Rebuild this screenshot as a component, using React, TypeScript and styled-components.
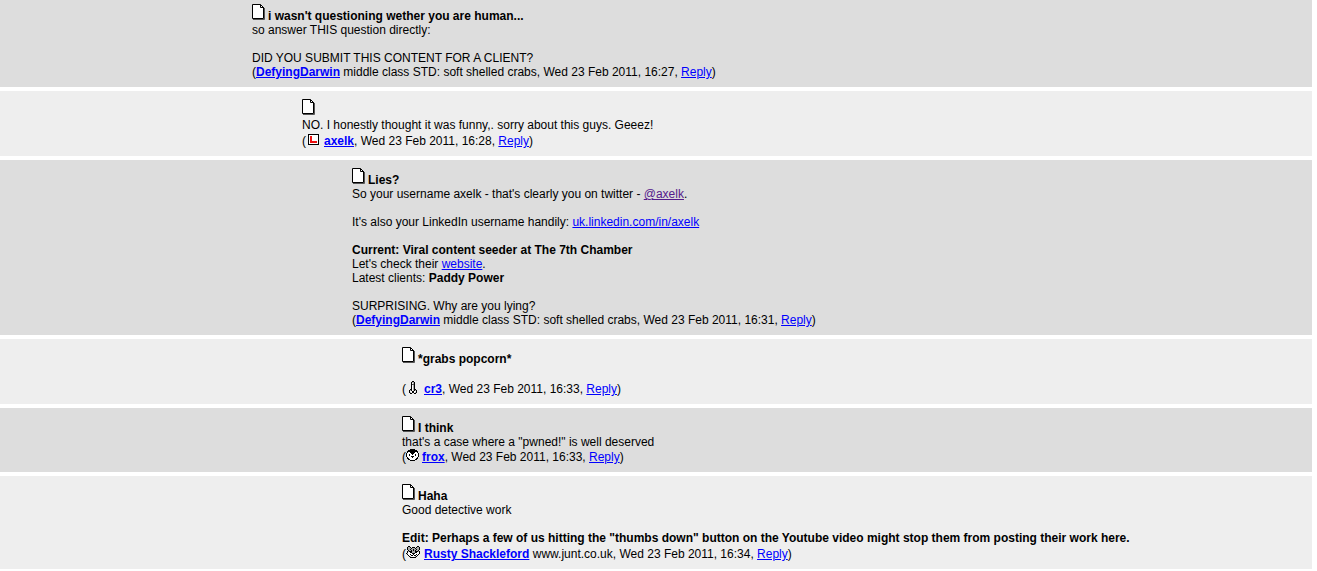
import React from "react";
import styled, { createGlobalStyle } from "styled-components";

const GlobalStyle = createGlobalStyle`
  body {
    margin: 0;
    background: #ffffff;
    color: #000000;
    font: 12px/14px Arial, "Liberation Sans", sans-serif;
  }
`;

const Thread = styled.main`
  display: flex;
  flex-direction: column;
  gap: 4px;
  margin-right: 5px;
`;

const Post = styled.article<{ $depth: number; $shaded?: boolean; $first?: boolean }>`
  padding: ${(p) => (p.$first ? 4 : 8)}px 8px 8px ${(p) => p.$depth * 50 + 2}px;
  background: ${(p) => (p.$shaded ? "#dddddd" : "#eeeeee")};
`;

const Title = styled.h2`
  display: flex;
  align-items: flex-end;
  gap: 3px;
  height: 19px;
  margin: 0;
  font-size: 12px;
  line-height: 14px;
`;

const DocIcon = styled.svg`
  align-self: flex-start;
  width: 13px;
  height: 16px;
  flex: none;
`;

const Body = styled.p`
  margin: 0;
`;

const Byline = styled.footer<{ $lift?: number }>`
  padding-top: ${(p) => p.$lift ?? 0}px;
`;

const Link = styled.a<{ $visited?: boolean }>`
  color: ${(p) => (p.$visited ? "#551a8b" : "#0000ff")};
  text-decoration: underline;
`;

const Author = styled(Link)`
  font-weight: bold;
`;

const Badge = styled.svg`
  height: 14px;
  margin-right: 3px;
  vertical-align: top;
  overflow: visible;
`;

const Doc = () => (
  <DocIcon viewBox="0 0 13 16" aria-hidden="true">
    <path d="M1 15.5H12.5V4" fill="none" stroke="#555" />
    <path d="M.5 .5H8.5L11.5 3.5V14.5H.5Z" fill="#fff" stroke="#000" />
    <path d="M8.5 .5V3.5H12" fill="none" stroke="#000" />
  </DocIcon>
);

const palette: Record<string, string> = {
  k: "#000000",
  w: "#ffffff",
  g: "#aaaaaa",
  d: "#555555",
  r: "#ee1111",
};

const icons: Record<string, string[]> = {
  square: [
    "",
    "..kkkkkkkkkkk",
    "..kwwwwwwwwwk",
    "..kwrrwwwwwwk",
    "..kwrrwwwwwwk",
    "..kwrrwwwwwwk",
    "..kwrrwwwwwwk",
    "..kwrrwwwwwwk",
    "..kwrrrrrrrwk",
    "..kwrrrrrrrwk",
    "..kwwwwwwwwwk",
    "..kkkkkkkkkkk",
  ],
  rocket: [
    "......kk",
    ".....kggk",
    ".....kwgk",
    ".....kddk",
    ".....kwgk",
    ".....kwgk",
    ".....kwgk",
    ".....kwgk",
    "....kkwgkk",
    "...kgkwgkgk",
    "...kwwkkwwk",
    "...kgwkkwgk",
    "....kk..kk",
  ],
  penguin: [
    "....kkkkk",
    "..kkkkkkkkk",
    ".kkkkkkkkkkk",
    ".kwwkkkkkwwk",
    "kwwwwkkkwwwwk",
    "kwwkwwkwwkwwk",
    "kwwkwwwwwkwwk",
    "kwwwwkkkwwwwk",
    ".kwwwwkwwwwk",
    ".kkwwwwwwwkk",
    "..kkwwwwwkk",
    "....kkkkk",
  ],
  cat: [
    "..kk.......kk",
    ".kggk.kkk.kggk",
    ".kgggkgggkgggk",
    ".kggkggkggkggk",
    "..kggkgkgkggk",
    ".kgkkkgggkkkgk",
    ".kwwkkgggkkwwk",
    "kgwwwwkkkwwwwk",
    ".kwwkwwkwwkwk",
    "..kwwkkwkkwk",
    "...kgwwwwgk",
    "....kkkkkk",
  ],
};

const PixelBadge = ({ name, width = 15 }: { name: string; width?: number }) => (
  <Badge width={width} viewBox={`0 0 ${width} 14`} shapeRendering="crispEdges" aria-hidden="true">
    {icons[name].flatMap((row, y) =>
      [...row].map((c, x) =>
        palette[c] ? <rect key={`${x}-${y}`} x={x} y={y - 1} width="1" height="1" fill={palette[c]} /> : null
      )
    )}
  </Badge>
);

const Reply = () => <Link href="#reply">Reply</Link>;

export default function App() {
  return (
    <>
      <GlobalStyle />
      <Thread>
        <Post $depth={5} $shaded $first>
          <Title><Doc />i wasn't questioning wether you are human...</Title>
          <Body>
            so answer THIS question directly:<br /><br />
            DID YOU SUBMIT THIS CONTENT FOR A CLIENT?
          </Body>
          <Byline>
            (<Author href="#DefyingDarwin">DefyingDarwin</Author> middle class STD: soft shelled crabs, Wed 23 Feb 2011, 16:27, <Reply />)
          </Byline>
        </Post>

        <Post $depth={6}>
          <Title><Doc /></Title>
          <Body>NO. I honestly thought it was funny,. sorry about this guys. Geeez!</Body>
          <Byline $lift={2}>
            (<PixelBadge name="square" /><Author href="#axelk">axelk</Author>, Wed 23 Feb 2011, 16:28, <Reply />)
          </Byline>
        </Post>

        <Post $depth={7} $shaded>
          <Title><Doc />Lies?</Title>
          <Body>
            So your username axelk - that's clearly you on twitter - <Link href="#twitter" $visited>@axelk</Link>.<br /><br />
            It's also your LinkedIn username handily: <Link href="#linkedin">uk.linkedin.com/in/axelk</Link><br /><br />
            <b>Current: Viral content seeder at The 7th Chamber</b><br />
            Let's check their <Link href="#website">website</Link>.<br />
            Latest clients: <b>Paddy Power</b><br /><br />
            SURPRISING. Why are you lying?
          </Body>
          <Byline>
            (<Author href="#DefyingDarwin">DefyingDarwin</Author> middle class STD: soft shelled crabs, Wed 23 Feb 2011, 16:31, <Reply />)
          </Byline>
        </Post>

        <Post $depth={8}>
          <Title><Doc />*grabs popcorn*</Title>
          <Body><br /></Body>
          <Byline $lift={2}>
            (<PixelBadge name="rocket" /><Author href="#cr3">cr3</Author>, Wed 23 Feb 2011, 16:33, <Reply />)
          </Byline>
        </Post>

        <Post $depth={8} $shaded>
          <Title><Doc />I think</Title>
          <Body>that's a case where a "pwned!" is well deserved</Body>
          <Byline $lift={1}>
            (<PixelBadge name="penguin" width={13} /><Author href="#frox">frox</Author>, Wed 23 Feb 2011, 16:33, <Reply />)
          </Byline>
        </Post>

        <Post $depth={8}>
          <Title><Doc />Haha</Title>
          <Body>
            Good detective work<br /><br />
            <b>Edit: Perhaps a few of us hitting the "thumbs down" button on the Youtube video might stop them from posting their work here.</b>
          </Body>
          <Byline $lift={2}>
            (<PixelBadge name="cat" /><Author href="#RustyShackleford">Rusty Shackleford</Author> www.junt.co.uk, Wed 23 Feb 2011, 16:34, <Reply />)
          </Byline>
        </Post>
      </Thread>
    </>
  );
}
